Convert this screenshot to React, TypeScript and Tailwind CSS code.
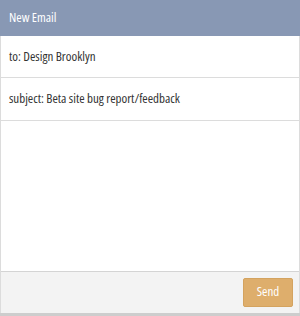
export default function App() {
  return (
    <div className="w-[300px] h-[316px] flex flex-col bg-white text-[13px] text-[#333] font-['Open_Sans',sans-serif] [font-stretch:condensed]">
      <div className="h-[36px] shrink-0 flex items-center px-[9px] bg-[#8898b4] text-white">New Email</div>
      <div className="flex-1 flex flex-col border-x border-[#dcdcdc]">
        <div className="h-[42px] shrink-0 flex items-center px-[8px] border-b border-[#dcdcdc]">to: Design Brooklyn</div>
        <div className="h-[43px] shrink-0 flex items-center px-[8px] border-b border-[#dcdcdc]">subject: Beta site bug report/feedback</div>
        <div className="flex-1" />
        <div className="h-[42px] shrink-0 flex items-center justify-end px-[6px] bg-[#f3f3f3] border-t border-[#d4d4d4]">
          <button className="w-[50px] h-[29px] mt-[-1px] rounded-[2px] bg-[#deae6c] border border-[#d4a35f] text-white text-[13px]">Send</button>
        </div>
      </div>
      <div className="h-[3px] shrink-0 bg-[#cdcdcd]" />
    </div>
  );
}
